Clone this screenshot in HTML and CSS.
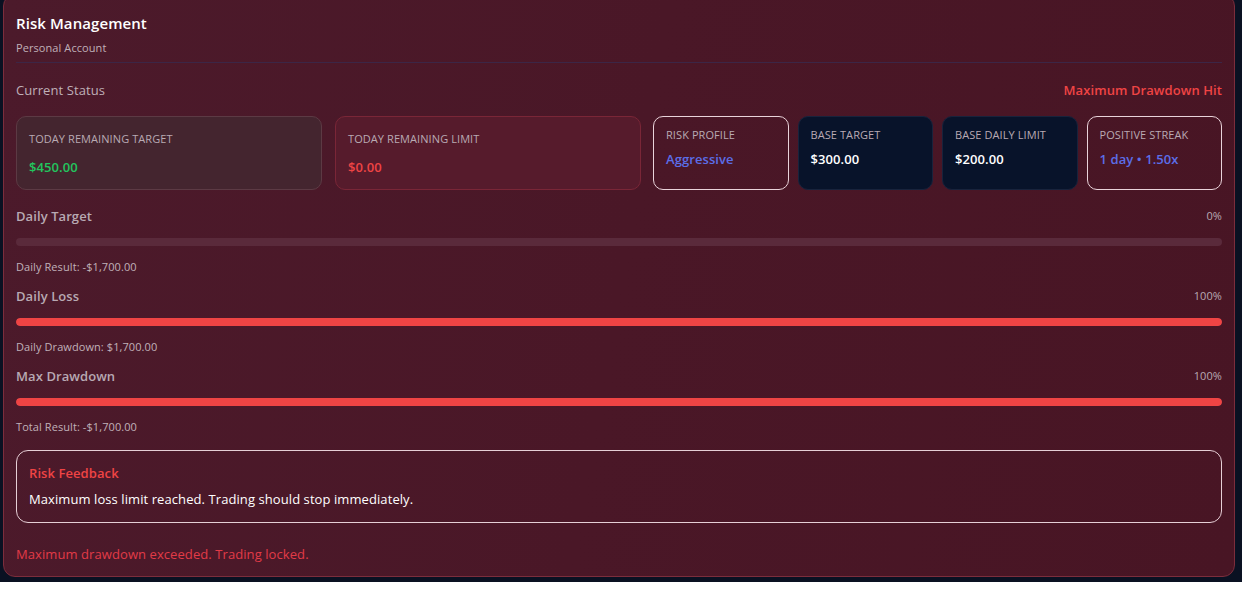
FILE: index.html
```html
<!DOCTYPE html>
<html lang="en">
<head>
<meta charset="utf-8">
<title>Risk Management</title>
<link rel="stylesheet" href="styles.css">
</head>
<body>
<div class="page">
  <section class="risk-card">
    <header class="risk-header">
      <h1 class="risk-title">Risk Management</h1>
      <p class="risk-account">Personal Account</p>
    </header>

    <div class="status-row">
      <span class="status-label">Current Status</span>
      <span class="status-value">Maximum Drawdown Hit</span>
    </div>

    <div class="stats">
      <div class="stats-main">
        <div class="stat stat-target">
          <div class="stat-label">Today Remaining Target</div>
          <div class="stat-value text-green">$450.00</div>
        </div>
        <div class="stat stat-limit">
          <div class="stat-label">Today Remaining Limit</div>
          <div class="stat-value text-red">$0.00</div>
        </div>
      </div>
      <div class="stats-side">
        <div class="mini mini-outline">
          <div class="stat-label">Risk Profile</div>
          <div class="mini-value text-blue">Aggressive</div>
        </div>
        <div class="mini mini-dark">
          <div class="stat-label">Base Target</div>
          <div class="mini-value">$300.00</div>
        </div>
        <div class="mini mini-dark">
          <div class="stat-label">Base Daily Limit</div>
          <div class="mini-value">$200.00</div>
        </div>
        <div class="mini mini-outline">
          <div class="stat-label">Positive Streak</div>
          <div class="mini-value text-blue">1 day • 1.50x</div>
        </div>
      </div>
    </div>

    <div class="meter">
      <div class="meter-head">
        <span class="meter-title">Daily Target</span>
        <span class="meter-pct">0%</span>
      </div>
      <div class="meter-track"><div class="meter-fill" style="width: 0%"></div></div>
      <div class="meter-note">Daily Result: -$1,700.00</div>
    </div>

    <div class="meter">
      <div class="meter-head">
        <span class="meter-title">Daily Loss</span>
        <span class="meter-pct">100%</span>
      </div>
      <div class="meter-track"><div class="meter-fill" style="width: 100%"></div></div>
      <div class="meter-note">Daily Drawdown: $1,700.00</div>
    </div>

    <div class="meter">
      <div class="meter-head">
        <span class="meter-title">Max Drawdown</span>
        <span class="meter-pct">100%</span>
      </div>
      <div class="meter-track"><div class="meter-fill" style="width: 100%"></div></div>
      <div class="meter-note">Total Result: -$1,700.00</div>
    </div>

    <div class="feedback">
      <div class="feedback-title">Risk Feedback</div>
      <div class="feedback-text">Maximum loss limit reached. Trading should stop immediately.</div>
    </div>

    <p class="lock-note">Maximum drawdown exceeded. Trading locked.</p>
  </section>
</div>
</body>
</html>
```

FILE: styles.css
```css
* {
  box-sizing: border-box;
}

html,
body {
  margin: 0;
  padding: 0;
  background: #ffffff;
}

body {
  font-family: "Open Sans", "Noto Sans", "Liberation Sans", sans-serif;
  letter-spacing: 0.08px;
  color: #ffffff;
}

.page {
  background: #0a1122;
  height: 582px;
  padding: 0 7px 0 3px;
  overflow: hidden;
}

.risk-card {
  margin-top: -6px;
  height: 583px;
  border: 1px solid #7c2d3c;
  border-radius: 12px;
  background: linear-gradient(100deg, #4c1a2b 0%, #4a1727 50%, #481524 100%);
  padding: 18px 12px 0 12px;
}

.risk-header {
  padding-bottom: 6px;
  border-bottom: 1px solid #3c2646;
}

.risk-title {
  margin: 0;
  font-size: 15px;
  line-height: 20px;
  font-weight: 600;
  color: #ffffff;
}

.risk-account {
  margin: 7px 0 0;
  font-size: 11px;
  line-height: 16px;
  color: #c0b0b8;
}

.status-row {
  margin-top: 18px;
  display: flex;
  justify-content: space-between;
  align-items: center;
  font-size: 13px;
  line-height: 18px;
}

.status-label {
  color: #bfb0b8;
}

.status-value {
  color: #ef4444;
  font-weight: 600;
}

.stats {
  margin-top: 17px;
  display: grid;
  grid-template-columns: 625fr 569fr;
  gap: 12px;
}

.stats-main {
  display: grid;
  grid-template-columns: 1fr 1fr;
  gap: 13px;
}

.stats-side {
  display: grid;
  grid-template-columns: repeat(4, 1fr);
  gap: 9px;
}

.stat {
  border-radius: 10px;
  padding: 14px 12px 13px;
  display: flex;
  flex-direction: column;
  gap: 11px;
}

.stat-target {
  background: #44252f;
  border: 1px solid #5c3a44;
}

.stat-limit {
  background: #561b2c;
  border: 1px solid #7a2637;
}

.stat-label {
  font-size: 11px;
  line-height: 16px;
  text-transform: uppercase;
  color: #b9aab3;
}

.stat-value {
  font-size: 13px;
  line-height: 18px;
  font-weight: 600;
}

.mini {
  border-radius: 10px;
  padding: 10px 12px 9px;
  display: flex;
  flex-direction: column;
  gap: 7px;
}

.mini-outline {
  border: 1px solid #e9d3da;
}

.mini-dark {
  background: #08132a;
  border: 1px solid #18233c;
}

.mini-value {
  font-size: 13px;
  line-height: 18px;
  font-weight: 600;
  color: #ffffff;
}

.text-green {
  color: #22c55e;
}

.text-red {
  color: #ef4444;
}

.text-blue {
  color: #5b6ee8;
}

.meter {
  margin-top: 17px;
}

.meter + .meter {
  margin-top: 12px;
}

.meter-head {
  display: flex;
  justify-content: space-between;
  align-items: center;
  line-height: 18px;
}

.meter-title {
  font-size: 13px;
  font-weight: 600;
  color: #b8a9b3;
}

.meter-pct {
  font-size: 11px;
  color: #b8a9b3;
}

.meter-track {
  margin-top: 13px;
  height: 8px;
  border-radius: 4px;
  background: #5a2a3b;
  overflow: hidden;
}

.meter-fill {
  height: 100%;
  border-radius: 4px;
  background: #ef4444;
}

.meter-note {
  margin-top: 13px;
  font-size: 11px;
  line-height: 16px;
  color: #c0b1b9;
}

.feedback {
  margin-top: 15px;
  border: 1px solid #e6cfd6;
  border-radius: 12px;
  padding: 13px 12px 14px;
}

.feedback-title {
  font-size: 13px;
  line-height: 18px;
  font-weight: 600;
  color: #ef4444;
}

.feedback-text {
  margin-top: 8px;
  font-size: 13px;
  line-height: 18px;
  color: #ffffff;
}

.lock-note {
  margin: 22px 0 0;
  font-size: 13px;
  line-height: 18px;
  color: #e23b47;
}
```
